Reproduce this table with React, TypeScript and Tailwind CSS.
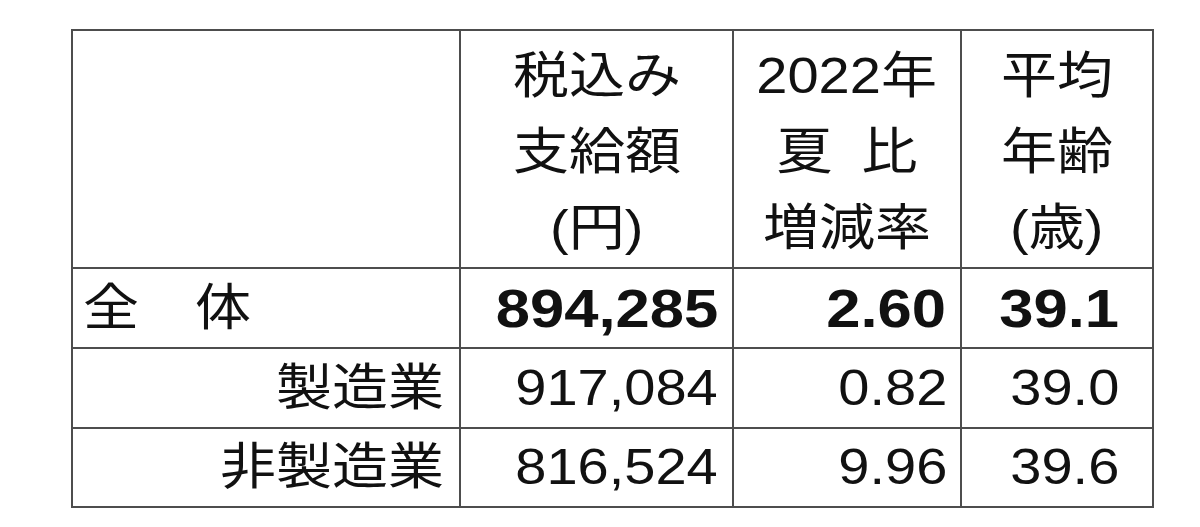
import React from "react";

const cjk = '"Liberation Sans", "Noto Sans CJK JP", sans-serif';
const num = '"Liberation Sans", Arial, sans-serif';

function S({ children, origin = "origin-center", className = "" }: { children: React.ReactNode; origin?: string; className?: string }) {
  return <span className={`inline-block scale-x-[1.12] ${origin} ${className}`}>{children}</span>;
}

function B({ children }: { children: React.ReactNode }) {
  return <span className="inline-block scale-x-[1.14] origin-right">{children}</span>;
}

export default function App() {
  const cell = "border-r-2 border-b-2 border-[#4d4d4d] flex items-center";
  return (
    <div className="w-[1200px] h-[527px] bg-white overflow-hidden pt-[29px] pl-[71px] text-[#111]">
      <div
        className="grid grid-cols-[388px_273px_228px_192px] grid-rows-[238px_80px_80px_79px] border-t-2 border-l-2 border-[#4d4d4d] w-fit"
        style={{ fontFamily: cjk }}
      >
        {/* header */}
        <div className={cell} />
        <div className={`${cell} flex-col justify-center text-[50px] leading-[76px] pt-[6px]`}>
          <S>税込み</S>
          <S>支給額</S>
          <S>(円)</S>
        </div>
        <div className={`${cell} flex-col justify-center text-[50px] leading-[76px] pt-[6px]`}>
          <S>2022年</S>
          <S>
            夏<span className="inline-block w-[26px]" />比
          </S>
          <S>増減率</S>
        </div>
        <div className={`${cell} flex-col justify-center text-[50px] leading-[76px] pt-[6px]`}>
          <S>平均</S>
          <S>年齢</S>
          <S>(歳)</S>
        </div>

        {/* row 1 */}
        <div className={`${cell} justify-start pl-[10px] text-[50px]`}>
          <S origin="origin-left">全　体</S>
        </div>
        <div className={`${cell} justify-end pr-[14px] text-[54px] font-bold`} style={{ fontFamily: num }}>
          <B>894,285</B>
        </div>
        <div className={`${cell} justify-end pr-[14px] text-[54px] font-bold`} style={{ fontFamily: num }}>
          <B>2.60</B>
        </div>
        <div className={`${cell} justify-end pr-[33px] text-[54px] font-bold`} style={{ fontFamily: num }}>
          <B>39.1</B>
        </div>

        {/* row 2 */}
        <div className={`${cell} justify-end pr-[15px] text-[50px]`}>
          <S origin="origin-right">製造業</S>
        </div>
        <div className={`${cell} justify-end pr-[14px] text-[50px]`} style={{ fontFamily: num }}>
          <S origin="origin-right">917,084</S>
        </div>
        <div className={`${cell} justify-end pr-[13px] text-[50px]`} style={{ fontFamily: num }}>
          <S origin="origin-right">0.82</S>
        </div>
        <div className={`${cell} justify-end pr-[33px] text-[50px]`} style={{ fontFamily: num }}>
          <S origin="origin-right">39.0</S>
        </div>

        {/* row 3 */}
        <div className={`${cell} justify-end pr-[15px] text-[50px]`}>
          <S origin="origin-right">非製造業</S>
        </div>
        <div className={`${cell} justify-end pr-[14px] text-[50px]`} style={{ fontFamily: num }}>
          <S origin="origin-right">816,524</S>
        </div>
        <div className={`${cell} justify-end pr-[13px] text-[50px]`} style={{ fontFamily: num }}>
          <S origin="origin-right">9.96</S>
        </div>
        <div className={`${cell} justify-end pr-[33px] text-[50px]`} style={{ fontFamily: num }}>
          <S origin="origin-right">39.6</S>
        </div>
      </div>
    </div>
  );
}
